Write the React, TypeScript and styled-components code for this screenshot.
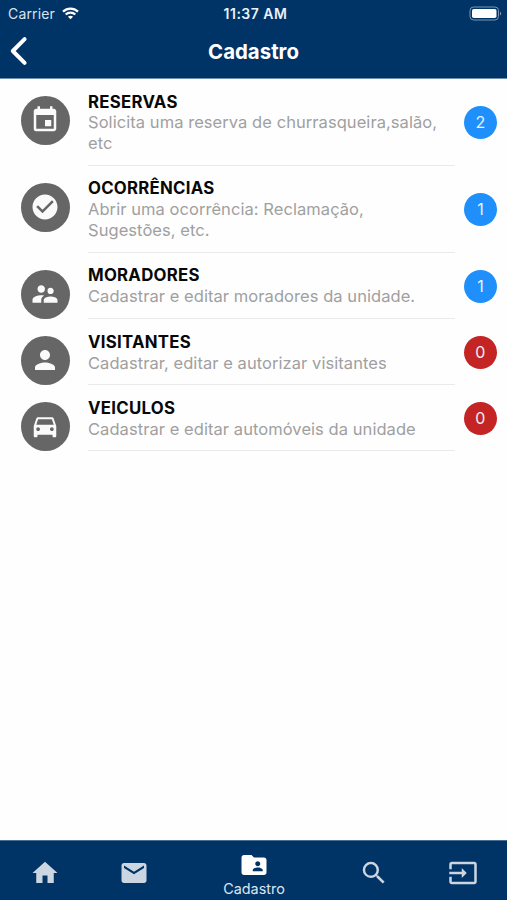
import React from "react";
import styled, { createGlobalStyle } from "styled-components";
import type { IconType } from "react-icons";
import {
  MdEvent,
  MdCheckCircle,
  MdSupervisorAccount,
  MdPerson,
  MdDirectionsCar,
  MdHome,
  MdEmail,
  MdFolderShared,
  MdSearch,
  MdInput,
} from "react-icons/md";

const navy = "#003366";

const GlobalStyle = createGlobalStyle`
  * { box-sizing: border-box; }
  body { margin: 0; background: #fff; font-family: Inter, "Liberation Sans", sans-serif; }
`;

const Screen = styled.div`
  display: flex;
  flex-direction: column;
  width: 507px;
  height: 900px;
  background: #fefefe;
  overflow: hidden;
`;

const Header = styled.header`
  height: 79px;
  flex: none;
  background: ${navy};
  border-bottom: 1px solid #6f8fae;
  color: #fff;
`;

const StatusBar = styled.div`
  display: grid;
  grid-template-columns: 1fr auto 1fr;
  align-items: center;
  height: 27px;
  padding: 0 5px 0 8px;
  font-size: 14px;
  line-height: 27px;
`;

const Carrier = styled.div`
  display: flex;
  align-items: center;
  gap: 7px;
  color: #d9e3ee;
  letter-spacing: 0.15px;
`;

const Clock = styled.div`
  padding-left: 1px;
  font-weight: 600;
  font-size: 14px;
  letter-spacing: 0.5px;
  color: #eaf1f8;
`;

const Battery = styled.div`
  display: flex;
  justify-content: flex-end;
`;

const TitleBar = styled.div`
  display: grid;
  grid-template-columns: 60px 1fr 60px;
  align-items: center;
  height: 48px;
`;

const BackButton = styled.button`
  display: flex;
  padding: 0 0 0 9px;
  border: 0;
  background: none;
`;

const Title = styled.h1`
  margin: 0;
  padding-top: 1px;
  text-align: center;
  font-size: 20.4px;
  font-weight: 700;
  line-height: 24px;
`;

const List = styled.main`
  flex: 1;
`;

const Row = styled.div`
  display: grid;
  grid-template-columns: 67.5px 366.5px 33px;
  column-gap: 0;
  padding-left: 20.5px;
`;

const Avatar = styled.div`
  display: flex;
  align-items: center;
  justify-content: center;
  width: 49px;
  height: 49px;
  margin-top: 17px;
  padding: 0 1px 1px 0;
  border-radius: 50%;
  background: #666;
  color: #fafafa;
`;

const Body = styled.div`
  padding: 12.5px 0 10.9px;
  border-bottom: 1px solid #eaeaea;
`;

const Name = styled.div`
  font-size: 16.8px;
  font-weight: 650;
  letter-spacing: 0.26px;
  line-height: 20.8px;
  color: #080808;
  white-space: nowrap;
`;

const Description = styled.div`
  padding-top: 0.2px;
  font-size: 16.5px;
  letter-spacing: 0.06px;
  line-height: 20.8px;
  color: #a0a0a0;
  white-space: pre;
`;

const Badge = styled.div<{ $empty: boolean }>`
  align-self: center;
  width: 33px;
  height: 33px;
  margin-left: 9.4px;
  border-radius: 50%;
  background: ${(p) => (p.$empty ? "#c42424" : "#1f90fb")};
  color: #e9f1fa;
  font-size: 16px;
  line-height: 33px;
  text-align: center;
`;

const TabBar = styled.nav`
  display: grid;
  grid-template-columns: 90px 88px 152px 88px 89px;
  height: 60px;
  flex: none;
  background: ${navy};
  border-top: 1px solid #486d92;
`;

const Tab = styled.button<{ $active?: boolean }>`
  display: flex;
  flex-direction: column;
  align-items: center;
  padding: ${(p) => (p.$active ? "9px" : "17px")} 0 0;
  border: 0;
  background: none;
  font-family: inherit;
  color: ${(p) => (p.$active ? "#fff" : "#cbd6e2")};
`;

const TabLabel = styled.span`
  font-size: 14.4px;
  line-height: 17px;
  color: #dce6f0;
`;

interface Entry {
  name: string;
  text: string;
  count: number;
  icon: IconType;
}

const entries: Entry[] = [
  { name: "RESERVAS", text: "Solicita uma reserva de churrasqueira,salão,\netc", count: 2, icon: MdEvent },
  { name: "OCORRÊNCIAS", text: "Abrir uma ocorrência: Reclamação,\nSugestões, etc.", count: 1, icon: MdCheckCircle },
  { name: "MORADORES", text: "Cadastrar e editar moradores da unidade.", count: 1, icon: MdSupervisorAccount },
  { name: "VISITANTES", text: "Cadastrar, editar e autorizar visitantes", count: 0, icon: MdPerson },
  { name: "VEICULOS", text: "Cadastrar e editar automóveis da unidade", count: 0, icon: MdDirectionsCar },
];

const tabs: { icon: IconType; label?: string }[] = [
  { icon: MdHome },
  { icon: MdEmail },
  { icon: MdFolderShared, label: "Cadastro" },
  { icon: MdSearch },
  { icon: MdInput },
];

const WifiIcon = () => (
  <svg width="17" height="13" viewBox="0 0 17 13" fill="none" stroke="#fff" strokeWidth="2.3">
    <path d="M1 4.6C5.2.5 11.8.5 16 4.6" />
    <path d="M3.7 7.5c2.7-2.6 6.9-2.6 9.6 0" />
    <path d="M8.5 12.3 5.9 9.7c1.5-1.3 3.7-1.3 5.2 0z" fill="#fff" stroke="none" />
  </svg>
);

const BatteryIcon = () => (
  <svg width="33" height="15" viewBox="0 0 33 15">
    <rect x="1" y="1" width="28.5" height="13" rx="3.6" fill="none" stroke="#7d98b4" />
    <rect x="3" y="3" width="24.5" height="9" rx="1.8" fill="#fff" />
    <path d="M31 5.4c1.6.8 1.6 3.4 0 4.2z" fill="#7d98b4" />
  </svg>
);

export default function App() {
  return (
    <>
      <GlobalStyle />
      <Screen>
        <Header>
          <StatusBar>
            <Carrier>
              Carrier
              <WifiIcon />
            </Carrier>
            <Clock>11:37 AM</Clock>
            <Battery>
              <BatteryIcon />
            </Battery>
          </StatusBar>
          <TitleBar>
            <BackButton aria-label="Voltar">
              <svg width="20" height="30" viewBox="0 0 20 30" fill="none" stroke="#fff" strokeWidth="4" strokeLinecap="round" strokeLinejoin="round">
                <path d="M15.6 3.2 3.8 15l11.8 11.8" />
              </svg>
            </BackButton>
            <Title>Cadastro</Title>
          </TitleBar>
        </Header>
        <List>
          {entries.map(({ name, text, count, icon: Icon }) => (
            <Row key={name}>
              <Avatar>
                <Icon size={30} />
              </Avatar>
              <Body>
                <Name>{name}</Name>
                <Description>{text}</Description>
              </Body>
              <Badge $empty={count === 0}>{count}</Badge>
            </Row>
          ))}
        </List>
        <TabBar>
          {tabs.map(({ icon: Icon, label }, i) => (
            <Tab key={i} $active={!!label}>
              <Icon size={30} />
              {label && <TabLabel>{label}</TabLabel>}
            </Tab>
          ))}
        </TabBar>
      </Screen>
    </>
  );
}
